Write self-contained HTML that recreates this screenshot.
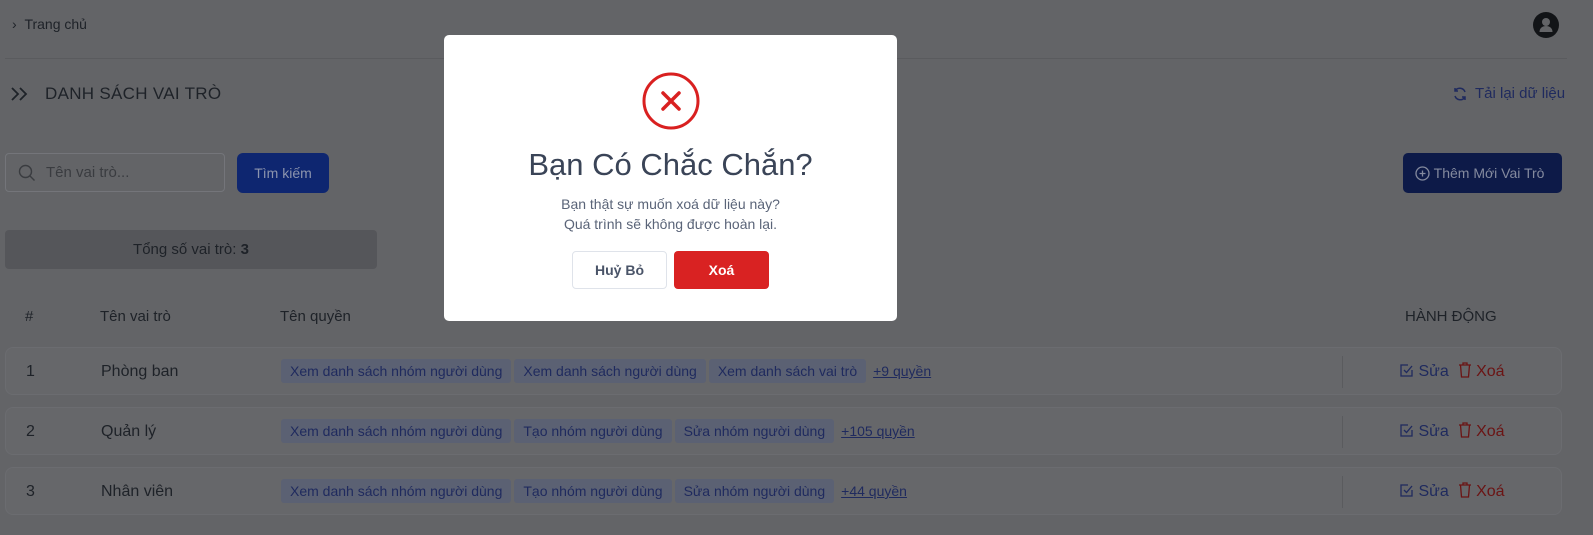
<!DOCTYPE html>
<html><head><meta charset="utf-8"><style>
*{box-sizing:border-box;margin:0;padding:0}
body{width:1593px;height:535px;overflow:hidden;background:#636467;font-family:"Liberation Sans",sans-serif;position:relative;color:#1e2228}
.a{position:absolute}
.tag{display:inline-block;background:#5b6173;color:#1f2a5e;font-size:14px;padding:0 9px;height:24px;line-height:24px;border-radius:3px;margin-right:3px;font-family:"Liberation Sans Narrow","Liberation Sans",sans-serif}
.more{color:#1f2a5e;font-size:14px;text-decoration:underline;font-family:"Liberation Sans Narrow","Liberation Sans",sans-serif;margin-left:4px}
.row{position:absolute;left:5px;width:1557px;height:48px;background:#66676a;border:1px solid #6b6c70;border-radius:8px}
.row .n{position:absolute;left:20px;top:15px;font-size:16px;color:#1e2228}
.row .nm{position:absolute;left:95px;top:15px;font-size:16px;color:#1e2228}
.row .tags{position:absolute;left:275px;top:11px;white-space:nowrap}
.row .div{position:absolute;left:1336px;top:8px;width:1px;height:32px;background:#5a5b5e}
.row .act{position:absolute;left:1393px;top:14px;font-size:16px;white-space:nowrap}
.act svg{vertical-align:-2px}
</style></head><body>
<div class="a" style="left:12px;top:16px;font-size:14px;color:#1e2228">›&nbsp;&nbsp;Trang chủ</div>
<div class="a" style="left:1533px;top:12px;width:26px;height:26px;border-radius:50%;background:#121417">
<svg width="26" height="26" viewBox="0 0 26 26"><circle cx="13" cy="10" r="4" fill="#636467"/><path d="M6.5 20c0-4 3-6 6.5-6s6.5 2 6.5 6z" fill="#636467"/></svg></div>
<div class="a" style="left:5px;top:58px;width:1562px;height:1px;background:#5a5b5e"></div>
<svg class="a" style="left:10px;top:86px" width="22" height="16" viewBox="0 0 22 16"><path d="M2 2l6 6-6 6M10 2l6 6-6 6" stroke="#1e2228" stroke-width="1.8" fill="none"/></svg>
<div class="a" style="left:45px;top:84px;font-size:17px;color:#1e2228;letter-spacing:.3px">DANH SÁCH VAI TRÒ</div>
<svg class="a" style="left:1452px;top:86px" width="16" height="16" viewBox="0 0 16 16"><path d="M13 6A5.5 5.5 0 0 0 3 5M3 10a5.5 5.5 0 0 0 10 1M3 2v3h3M13 14v-3h-3" stroke="#1f2a5e" stroke-width="1.5" fill="none"/></svg>
<div class="a" style="left:1475px;top:85px;font-size:15px;color:#1f2a5e">Tải lại dữ liệu</div>
<div class="a" style="left:5px;top:153px;width:220px;height:39px;border:1px solid #74757a;border-radius:4px;background:#636467"></div>
<svg class="a" style="left:18px;top:164px" width="18" height="18" viewBox="0 0 18 18"><circle cx="7.5" cy="7.5" r="6" stroke="#3a3c40" stroke-width="1.4" fill="none"/><path d="M12 12l4.5 4.5" stroke="#3a3c40" stroke-width="1.4"/></svg>
<div class="a" style="left:46px;top:164px;font-size:15px;color:#3a3c40">Tên vai trò...</div>
<div class="a" style="left:237px;top:153px;width:92px;height:40px;background:#0e2670;border-radius:6px;color:#8c94ad;font-size:14px;text-align:center;line-height:40px">Tìm kiếm</div>
<div class="a" style="left:1403px;top:153px;width:159px;height:40px;background:#0d1a48;border-radius:5px;color:#848a9e;font-size:14px;line-height:40px;padding-left:12px;white-space:nowrap"><svg width="15" height="15" viewBox="0 0 15 15" style="vertical-align:-3px"><circle cx="7.5" cy="7.5" r="6.5" stroke="#848a9e" stroke-width="1.3" fill="none"/><path d="M7.5 4.5v6M4.5 7.5h6" stroke="#848a9e" stroke-width="1.3"/></svg> Thêm Mới Vai Trò</div>
<div class="a" style="left:5px;top:230px;width:372px;height:39px;background:#55565a;border-radius:4px;text-align:center;line-height:39px;font-size:15px;color:#1e2228">Tổng số vai trò: <b>3</b></div>
<div class="a" style="left:25px;top:308px;font-size:15px">#</div>
<div class="a" style="left:100px;top:308px;font-size:15px">Tên vai trò</div>
<div class="a" style="left:280px;top:308px;font-size:15px">Tên quyền</div>
<div class="a" style="left:1405px;top:308px;font-size:15px">HÀNH ĐỘNG</div>
<div class="row" style="top:347px"><div class="n">1</div><div class="nm">Phòng ban</div><div class="tags"><span class="tag">Xem danh sách nhóm người dùng</span><span class="tag">Xem danh sách người dùng</span><span class="tag">Xem danh sách vai trò</span><span class="more">+9 quyền</span></div><div class="div"></div><div class="act"><span style="color:#1f2a5e"><svg width="15" height="15" viewBox="0 0 15 15"><path d="M13 7v6H2V2h7" stroke="#1f2a5e" stroke-width="1.3" fill="none"/><path d="M5 7l2.5 2.5L13 3" stroke="#1f2a5e" stroke-width="1.3" fill="none"/></svg> Sửa</span>&nbsp;&nbsp;<span style="color:#6b1414"><svg width="14" height="16" viewBox="0 0 14 16"><path d="M1 3h12M5 3V1h4v2M2.5 3l1 12h7l1-12" stroke="#6b1414" stroke-width="1.3" fill="none"/></svg> Xoá</span></div></div>
<div class="row" style="top:407px"><div class="n">2</div><div class="nm">Quản lý</div><div class="tags"><span class="tag">Xem danh sách nhóm người dùng</span><span class="tag">Tạo nhóm người dùng</span><span class="tag">Sửa nhóm người dùng</span><span class="more">+105 quyền</span></div><div class="div"></div><div class="act"><span style="color:#1f2a5e"><svg width="15" height="15" viewBox="0 0 15 15"><path d="M13 7v6H2V2h7" stroke="#1f2a5e" stroke-width="1.3" fill="none"/><path d="M5 7l2.5 2.5L13 3" stroke="#1f2a5e" stroke-width="1.3" fill="none"/></svg> Sửa</span>&nbsp;&nbsp;<span style="color:#6b1414"><svg width="14" height="16" viewBox="0 0 14 16"><path d="M1 3h12M5 3V1h4v2M2.5 3l1 12h7l1-12" stroke="#6b1414" stroke-width="1.3" fill="none"/></svg> Xoá</span></div></div>
<div class="row" style="top:467px"><div class="n">3</div><div class="nm">Nhân viên</div><div class="tags"><span class="tag">Xem danh sách nhóm người dùng</span><span class="tag">Tạo nhóm người dùng</span><span class="tag">Sửa nhóm người dùng</span><span class="more">+44 quyền</span></div><div class="div"></div><div class="act"><span style="color:#1f2a5e"><svg width="15" height="15" viewBox="0 0 15 15"><path d="M13 7v6H2V2h7" stroke="#1f2a5e" stroke-width="1.3" fill="none"/><path d="M5 7l2.5 2.5L13 3" stroke="#1f2a5e" stroke-width="1.3" fill="none"/></svg> Sửa</span>&nbsp;&nbsp;<span style="color:#6b1414"><svg width="14" height="16" viewBox="0 0 14 16"><path d="M1 3h12M5 3V1h4v2M2.5 3l1 12h7l1-12" stroke="#6b1414" stroke-width="1.3" fill="none"/></svg> Xoá</span></div></div>
<div class="a" style="left:444px;top:35px;width:453px;height:286px;background:#fff;border-radius:5px">
<svg class="a" style="left:197px;top:36px" width="60" height="60" viewBox="0 0 60 60"><circle cx="30" cy="30" r="27" stroke="#d92020" stroke-width="3" fill="none"/><path d="M22 22l16 16M38 22L22 38" stroke="#d92020" stroke-width="3.5" stroke-linecap="round"/></svg>
<div class="a" style="left:0;top:112px;width:453px;text-align:center;font-size:31px;color:#3a4457">Bạn Có Chắc Chắn?</div>
<div class="a" style="left:0;top:159px;width:453px;text-align:center;font-size:14px;color:#5a6478;line-height:20px">Bạn thật sự muốn xoá dữ liệu này?<br>Quá trình sẽ không được hoàn lại.</div>
<div class="a" style="left:128px;top:216px;width:95px;height:38px;border:1px solid #dfe3ea;border-radius:4px;text-align:center;line-height:36px;font-size:14px;font-weight:bold;color:#4a5468">Huỷ Bỏ</div>
<div class="a" style="left:230px;top:216px;width:95px;height:38px;background:#d92222;border-radius:4px;text-align:center;line-height:38px;font-size:14px;font-weight:bold;color:#fff">Xoá</div>
</div>
</body></html>
